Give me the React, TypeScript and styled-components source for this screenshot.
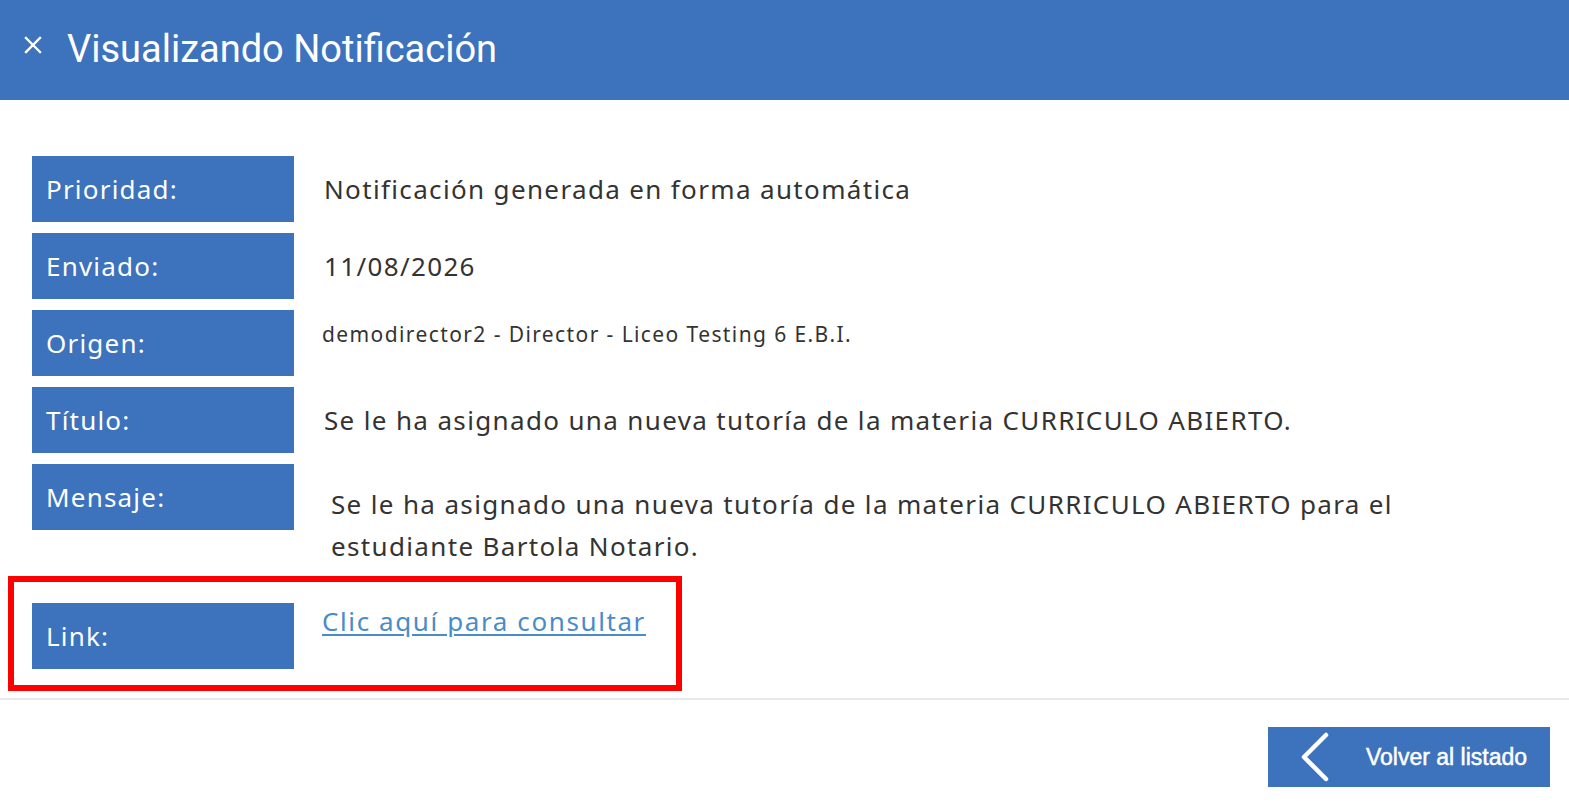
import styled, { createGlobalStyle } from 'styled-components'

const GlobalStyle = createGlobalStyle`
  html, body {
    margin: 0;
    padding: 0;
    background: #ffffff;
  }
  body {
    font-family: 'Noto Sans', 'Open Sans', sans-serif;
    color: #333333;
  }
`

type Field = {
  label: string
  value: string
  variant?: 'center' | 'small' | 'message'
}

const FIELDS: Field[] = [
  { label: 'Prioridad:', value: 'Notificación generada en forma automática' },
  { label: 'Enviado:', value: '11/08/2026' },
  {
    label: 'Origen:',
    value: 'demodirector2 - Director - Liceo Testing 6 E.B.I.',
    variant: 'small',
  },
  {
    label: 'Título:',
    value: 'Se le ha asignado una nueva tutoría de la materia CURRICULO ABIERTO.',
  },
  {
    label: 'Mensaje:',
    value:
      'Se le ha asignado una nueva tutoría de la materia CURRICULO ABIERTO para el estudiante Bartola Notario.',
    variant: 'message',
  },
]

const CloseIcon = () => (
  <svg width="18" height="18" viewBox="0 0 18 18">
    <path d="M2 2 L16 16 M16 2 L2 16" stroke="#ffffff" strokeWidth="2.4" strokeLinecap="square" />
  </svg>
)

const ChevronLeft = () => (
  <svg width="34" height="50" viewBox="0 0 34 50">
    <polyline
      points="28,3 6,25 28,47"
      fill="none"
      stroke="#ffffff"
      strokeWidth="4.5"
      strokeLinecap="round"
      strokeLinejoin="round"
    />
  </svg>
)

export default function App() {
  return (
    <Page>
      <GlobalStyle />
      <Header>
        <CloseButton>
          <CloseIcon />
        </CloseButton>
        <Title>Visualizando Notificación</Title>
      </Header>

      <Content>
        {FIELDS.map((field) => (
          <Row key={field.label}>
            <Label>{field.label}</Label>
            <Value $variant={field.variant ?? 'center'}>{field.value}</Value>
          </Row>
        ))}

        <Highlight>
          <Row $last>
            <Label>Link:</Label>
            <LinkValue href="#">Clic aquí para consultar</LinkValue>
          </Row>
        </Highlight>
      </Content>

      <Divider />

      <Footer>
        <BackButton>
          <ChevronLeft />
          <span>Volver al listado</span>
        </BackButton>
      </Footer>
    </Page>
  )
}

const Page = styled.div`
  width: 1569px;
  min-height: 805px;
  background: #ffffff;
`
const Header = styled.header`
  height: 100px;
  background: #3d72bd;
  display: flex;
  align-items: center;
  padding-left: 24px;
  box-sizing: border-box;
`
const CloseButton = styled.div`
  display: flex;
  align-items: center;
  margin-top: -10px;
  margin-right: 25px;
`
const Title = styled.h1`
  margin: 0;
  margin-top: -2px;
  font-family: Roboto, 'Liberation Sans', sans-serif;
  font-weight: 400;
  font-size: 38px;
  color: #ffffff;
`
const Content = styled.main`
  padding: 56px 0 0 32px;
`
const Row = styled.div<{ $last?: boolean }>`
  display: grid;
  grid-template-columns: 262px 1fr;
  column-gap: 30px;
  margin-bottom: ${(p) => (p.$last ? '0' : '11px')};
`
const Label = styled.div`
  height: 66px;
  box-sizing: border-box;
  padding-left: 14px;
  display: flex;
  align-items: center;
  background: #3d72bd;
  color: #ffffff;
  font-size: 26px;
  letter-spacing: 1.2px;
`
const Value = styled.div<{ $variant: 'center' | 'small' | 'message' }>`
  color: #333333;
  font-size: ${(p) => (p.$variant === 'small' ? '21px' : '26px')};
  letter-spacing: ${(p) => (p.$variant === 'small' ? '1.4px' : '1.35px')};
  line-height: ${(p) => (p.$variant === 'message' ? '42px' : '34px')};
  align-self: ${(p) => (p.$variant === 'center' ? 'center' : 'start')};
  padding-top: ${(p) =>
    p.$variant === 'small' ? '7px' : p.$variant === 'message' ? '19px' : '0'};
  margin-left: ${(p) =>
    p.$variant === 'message' ? '7px' : p.$variant === 'small' ? '-2px' : '0'};
  max-width: 1100px;
`
const Highlight = styled.section`
  width: 674px;
  box-sizing: border-box;
  margin-left: -24px;
  margin-top: -2px;
  border: 6px solid #ff0000;
  padding: 21px 0 16px 18px;
`
const LinkValue = styled.a`
  align-self: start;
  justify-self: start;
  margin-top: 1px;
  margin-left: -2px;
  font-size: 26px;
  letter-spacing: 1.6px;
  line-height: 34px;
  color: #4a8cc8;
  text-decoration: underline;
  text-underline-offset: 3px;
`
const Divider = styled.hr`
  margin: 7px 0 0;
  border: 0;
  height: 2px;
  background: #e9e9e9;
`
const Footer = styled.footer`
  display: flex;
  justify-content: flex-end;
  padding: 27px 19px 0 0;
`
const BackButton = styled.button`
  width: 282px;
  height: 60px;
  display: flex;
  align-items: center;
  gap: 34px;
  padding: 0 0 0 30px;
  border: 0;
  background: #3d72bd;
  color: #ffffff;
  font-family: 'Liberation Sans', Arial, sans-serif;
  font-size: 23px;
  -webkit-text-stroke: 0.5px #ffffff;
  cursor: pointer;
`
